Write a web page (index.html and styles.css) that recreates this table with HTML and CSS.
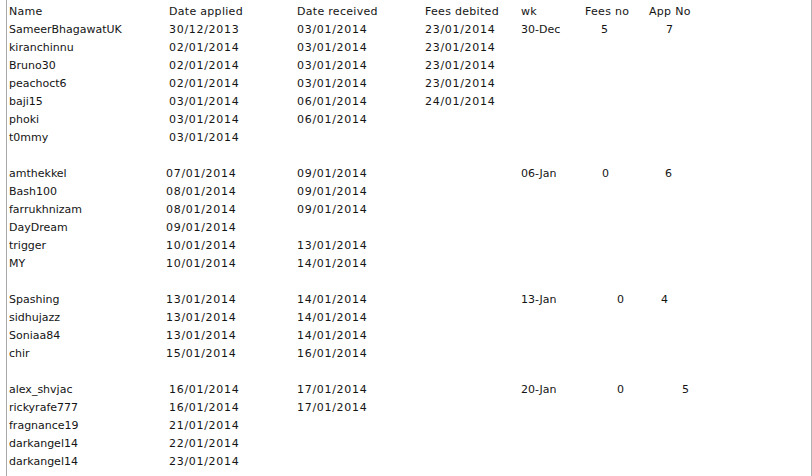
FILE: index.html
```html
<!DOCTYPE html>
<html lang="en">
<head>
  <meta charset="UTF-8">
  <title>Applications</title>
  <link rel="stylesheet" href="styles.css">
</head>
<body>
  <div class="post">
    <div class="row head">
      <span>Name</span><span>Date applied</span><span>Date received</span><span>Fees debited</span><span>wk</span><span>Fees no</span><span>App No</span>
    </div>

    <!-- week 1 -->
    <div class="row">
      <span>SameerBhagawatUK</span><span>30/12/2013</span><span>03/01/2014</span><span>23/01/2014</span><span>30-Dec</span><span class="pad-16">5</span><span class="pad-17">7</span>
    </div>
    <div class="row"><span>kiranchinnu</span><span>02/01/2014</span><span>03/01/2014</span><span>23/01/2014</span></div>
    <div class="row"><span>Bruno30</span><span>02/01/2014</span><span>03/01/2014</span><span>23/01/2014</span></div>
    <div class="row"><span>peachoct6</span><span>02/01/2014</span><span>03/01/2014</span><span>23/01/2014</span></div>
    <div class="row"><span>baji15</span><span>03/01/2014</span><span>06/01/2014</span><span>24/01/2014</span></div>
    <div class="row"><span>phoki</span><span>03/01/2014</span><span>06/01/2014</span></div>
    <div class="row"><span>t0mmy</span><span>03/01/2014</span></div>
    <div class="row gap"></div>

    <!-- week 2 -->
    <div class="row shifted">
      <span>amthekkel</span><span>07/01/2014</span><span>09/01/2014</span><span></span><span>06-Jan</span><span class="pad-17">0</span><span class="pad-16">6</span>
    </div>
    <div class="row shifted"><span>Bash100</span><span>08/01/2014</span><span>09/01/2014</span></div>
    <div class="row shifted"><span>farrukhnizam</span><span>08/01/2014</span><span>09/01/2014</span></div>
    <div class="row shifted"><span>DayDream</span><span>09/01/2014</span></div>
    <div class="row shifted"><span>trigger</span><span>10/01/2014</span><span>13/01/2014</span></div>
    <div class="row shifted"><span>MY</span><span>10/01/2014</span><span>14/01/2014</span></div>
    <div class="row gap"></div>

    <!-- week 3 -->
    <div class="row shifted">
      <span>Spashing</span><span>13/01/2014</span><span>14/01/2014</span><span></span><span>13-Jan</span><span class="pad-32">0</span><span class="pad-12">4</span>
    </div>
    <div class="row shifted"><span>sidhujazz</span><span>13/01/2014</span><span>14/01/2014</span></div>
    <div class="row shifted"><span>Soniaa84</span><span>13/01/2014</span><span>14/01/2014</span></div>
    <div class="row shifted"><span>chir</span><span>15/01/2014</span><span>16/01/2014</span></div>
    <div class="row gap"></div>

    <!-- week 4 -->
    <div class="row">
      <span>alex_shvjac</span><span>16/01/2014</span><span>17/01/2014</span><span></span><span>20-Jan</span><span class="pad-32">0</span><span class="pad-33">5</span>
    </div>
    <div class="row"><span>rickyrafe777</span><span>16/01/2014</span><span>17/01/2014</span></div>
    <div class="row"><span>fragnance19</span><span>21/01/2014</span></div>
    <div class="row"><span>darkangel14</span><span>22/01/2014</span></div>
    <div class="row"><span>darkangel14</span><span>23/01/2014</span></div>
  </div>
</body>
</html>
```

FILE: styles.css
```css
/* Global */
body {
  margin: 0;
  background: #ffffff;
  color: #141414;
  font-family: "DejaVu Sans", Verdana, sans-serif;
  font-size: 11px;
  overflow: hidden;
}

/* Post body with side rules */
.post {
  margin-left: 6px;
  width: 806px;
  height: 476px;
  border-left: 1px solid #a8a8a8;
  border-right: 1px solid #b4b4b4;
  padding-top: 3px;
  box-sizing: border-box;
}

/* Rows */
.row {
  display: grid;
  grid-template-columns: 160px 128px 128px 96px 64px 64px 1fr;
  height: 18px;
  line-height: 18px;
  padding-left: 2px;
  white-space: nowrap;
}
.row span:nth-child(2),
.row span:nth-child(3),
.row span:nth-child(4) {
  letter-spacing: 0.7px;
}
.row.head span {
  letter-spacing: 0.3px;
}
.row.shifted span:nth-child(2) {
  margin-left: -3px;
}

/* Hand-spaced numbers */
.pad-12 { padding-left: 12px; }
.pad-16 { padding-left: 16px; }
.pad-17 { padding-left: 17px; }
.pad-32 { padding-left: 32px; }
.pad-33 { padding-left: 33px; }
```
